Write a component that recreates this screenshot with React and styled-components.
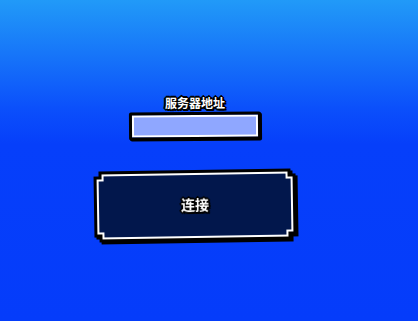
import React from 'react';
import styled, { createGlobalStyle } from 'styled-components';

const GlobalStyle = createGlobalStyle`
  html, body {
    margin: 0;
    padding: 0;
    height: 100%;
    overflow: hidden;
  }
  body {
    font-family: "Noto Sans CJK SC", "Noto Sans", sans-serif;
  }
`;

const notch = (s) => `polygon(
  ${s}px 0, calc(100% - ${s}px) 0, calc(100% - ${s}px) ${s}px, 100% ${s}px,
  100% calc(100% - ${s}px), calc(100% - ${s}px) calc(100% - ${s}px),
  calc(100% - ${s}px) 100%, ${s}px 100%, ${s}px calc(100% - ${s}px),
  0 calc(100% - ${s}px), 0 ${s}px, ${s}px ${s}px
)`;

const outline = `
  1px 0 0 #000, -1px 0 0 #000, 0 1px 0 #000, 0 -1px 0 #000,
  1px 1px 0 #000, -1px -1px 0 #000, 1px -1px 0 #000, -1px 1px 0 #000,
  2px 0 0 #000, -2px 0 0 #000, 0 2px 0 #000, 0 -2px 0 #000,
  2px 2px 0 #000
`;

const Page = styled.div`
  width: 100vw;
  height: 100vh;
  box-sizing: border-box;
  padding: 96px 28px 0 0;
  display: flex;
  flex-direction: column;
  align-items: center;
  background: linear-gradient(
    180deg,
    #219af8 0%,
    #1673f9 18%,
    #0b4ffb 34%,
    #063ffa 45%,
    #053cfa 100%
  );
`;

const Label = styled.label`
  color: #fff;
  font-size: 12px;
  font-weight: 700;
  line-height: 14px;
  text-shadow: ${outline};
  margin-bottom: 2px;
`;

const AddressInput = styled.input`
  box-sizing: border-box;
  width: 132px;
  height: 28px;
  border: 3px solid #000;
  border-radius: 2px;
  background: #8fa7ff;
  box-shadow: inset 0 0 0 2px #fff, 1px 1px 0 #000;
  outline: none;
  padding: 0 6px;
  transform: rotate(-0.4deg);
  font-family: inherit;
`;

const ButtonShadow = styled.div`
  margin-top: 30px;
  filter: drop-shadow(2px 2px 0 #000);
  transform: rotate(-0.9deg);
`;

const ButtonFrame = styled.button`
  display: block;
  box-sizing: border-box;
  width: 202px;
  height: 71px;
  padding: 3px;
  border: none;
  background: #000;
  clip-path: ${notch(5)};
  cursor: pointer;
`;

const ButtonEdge = styled.div`
  height: 100%;
  box-sizing: border-box;
  padding: 2px;
  background: #fff;
  clip-path: ${notch(5)};
`;

const ButtonFace = styled.div`
  height: 100%;
  box-sizing: border-box;
  padding-bottom: 3px;
  display: flex;
  align-items: center;
  justify-content: center;
  background: #02174c;
  clip-path: ${notch(5)};
  color: #fff;
  font-family: "Noto Sans CJK SC", "Noto Sans", sans-serif;
  font-size: 14px;
  font-weight: 700;
  text-shadow: ${outline};
`;

export default function App() {
  return (
    <>
      <GlobalStyle />
      <Page>
        <Label htmlFor="server">服务器地址</Label>
        <AddressInput id="server" type="text" />
        <ButtonShadow>
          <ButtonFrame type="button">
            <ButtonEdge>
              <ButtonFace>连接</ButtonFace>
            </ButtonEdge>
          </ButtonFrame>
        </ButtonShadow>
      </Page>
    </>
  );
}
